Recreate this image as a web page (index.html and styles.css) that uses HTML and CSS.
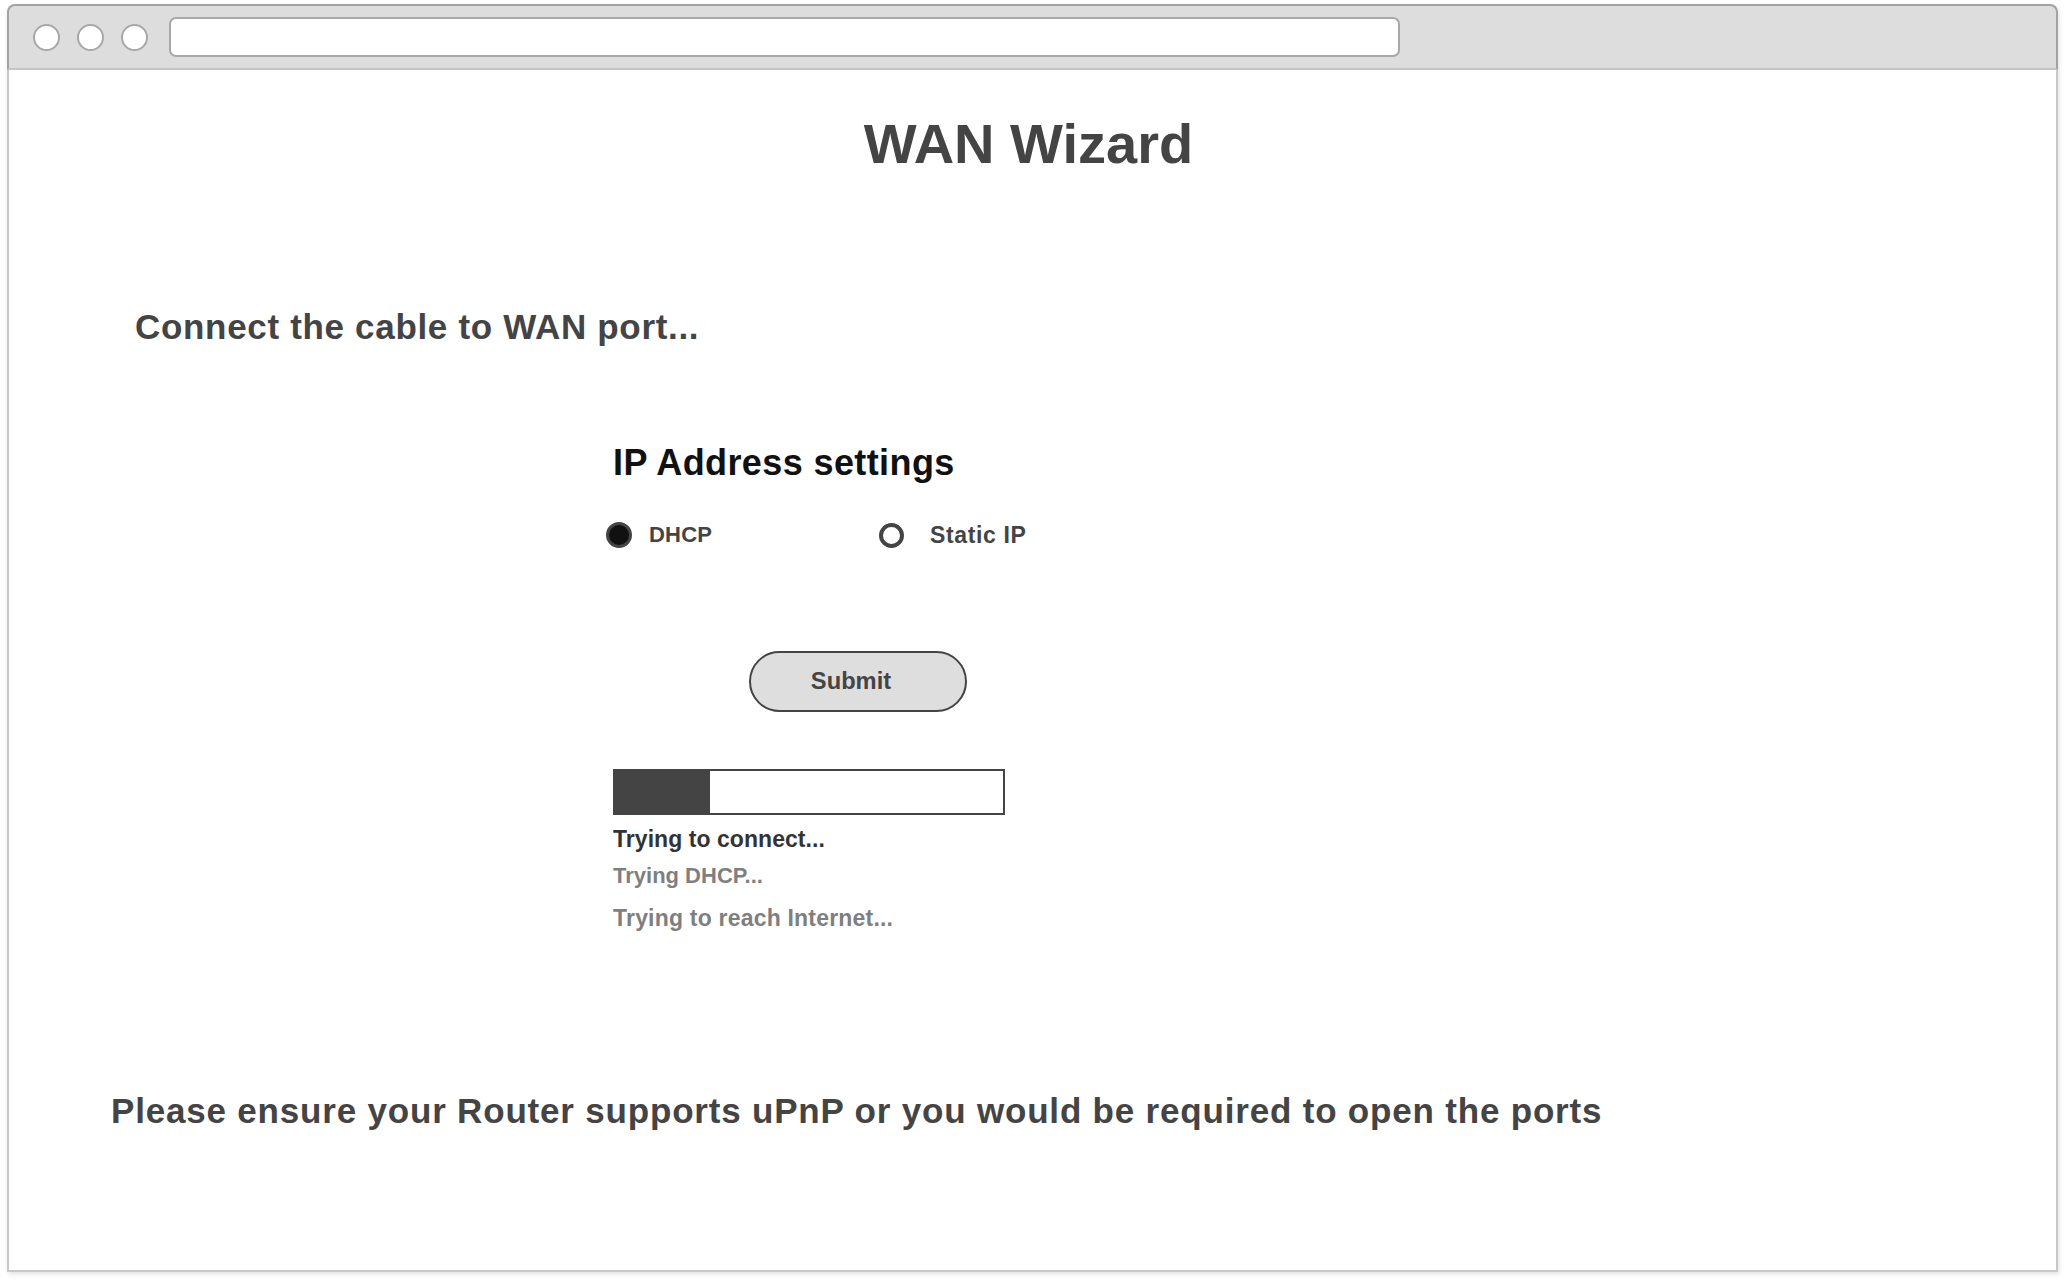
FILE: index.html
```html
<!DOCTYPE html>
<html lang="en">
<head>
<meta charset="utf-8">
<title>WAN Wizard</title>
<link rel="stylesheet" href="styles.css">
</head>
<body>
<div class="window">
  <div class="chrome">
    <span class="dot"></span>
    <span class="dot"></span>
    <span class="dot"></span>
    <div class="address"></div>
  </div>
  <div class="content">
    <h1 class="title">WAN Wizard</h1>
    <p class="connect">Connect the cable to WAN port...</p>
    <div class="group">
      <h2 class="ip-title">IP Address settings</h2>
      <div class="radios">
        <label class="radio radio-dhcp"><span class="circle checked"></span><span class="radio-label">DHCP</span></label>
        <label class="radio radio-static"><span class="circle"></span><span class="radio-label">Static IP</span></label>
      </div>
      <button class="submit">Submit</button>
      <div class="progress"><div class="progress-fill" style="width: 95px"></div></div>
      <p class="status status-main">Trying to connect...</p>
      <p class="status status-dhcp">Trying DHCP...</p>
      <p class="status status-net">Trying to reach Internet...</p>
    </div>
    <p class="notice">Please ensure your Router supports uPnP or you would be required to open the ports</p>
  </div>
</div>
</body>
</html>
```
FILE: styles.css
```css
* { box-sizing: border-box; }
html, body { margin: 0; padding: 0; background: #ffffff; }
body {
  font-family: "Liberation Sans", Arial, sans-serif;
  width: 2067px;
  height: 1282px;
  overflow: hidden;
}
.window {
  margin: 4px 9px 0 7px;
  width: 2051px;
  height: 1268px;
  display: flex;
  flex-direction: column;
  box-shadow: 1px 2px 5px rgba(0,0,0,0.12);
  border-radius: 8px 8px 0 0;
}
.chrome {
  height: 66px;
  flex: none;
  background: #dddddd;
  border: 2px solid #a2a2a2;
  border-bottom: 2px solid #c4c4c4;
  border-radius: 8px 8px 0 0;
  display: flex;
  align-items: center;
  padding-left: 24px;
  gap: 17px;
}
.dot {
  width: 27px;
  height: 27px;
  border-radius: 50%;
  background: #ffffff;
  border: 2px solid #a8a8a8;
  flex: none;
}
.address {
  margin-left: 4px;
  width: 1231px;
  height: 40px;
  background: #ffffff;
  border: 2px solid #a8a8a8;
  border-radius: 7px;
}
.content {
  flex: 1;
  background: #ffffff;
  border: 2px solid #c8c8c8;
  border-top: none;
  padding-top: 42px;
  display: flex;
  flex-direction: column;
  align-items: flex-start;
}
.title {
  margin: 0;
  align-self: stretch;
  text-align: center;
  font-size: 56px;
  line-height: 1.15;
  font-weight: bold;
  color: #444444;
  padding-right: 8px;
}
.connect {
  margin: 131px 0 0 126px;
  font-size: 35px;
  line-height: 1.15;
  font-weight: bold;
  color: #444444;
  letter-spacing: 0.68px;
}
.group {
  margin-left: 604px;
  display: flex;
  flex-direction: column;
  align-items: flex-start;
}
.ip-title {
  margin: 94px 0 0 0;
  font-size: 36px;
  line-height: 1.15;
  font-weight: bold;
  color: #111111;
  letter-spacing: 0.4px;
}
.radios {
  margin: 39px 0 0 -7px;
  display: flex;
  align-items: center;
  height: 26px;
}
.radio {
  display: flex;
  align-items: center;
  line-height: 1.15;
  font-weight: bold;
  color: #444444;
}
.radio-dhcp { width: 273px; gap: 17px; font-size: 22px; letter-spacing: 0.2px; }
.radio-static { gap: 26px; font-size: 23px; letter-spacing: 0.65px; }
.circle {
  width: 25px;
  height: 25px;
  border-radius: 50%;
  border: 4px solid #444444;
  background: #ffffff;
  flex: none;
}
.circle.checked {
  width: 26px;
  height: 26px;
  border: 3px solid #444444;
  background: #111111;
}
.submit {
  margin: 103px 0 0 136px;
  width: 218px;
  height: 61px;
  border-radius: 31px;
  border: 2px solid #444444;
  background: #dedede;
  font-family: "Liberation Sans", Arial, sans-serif;
  font-size: 23.7px;
  font-weight: bold;
  color: #444444;
  padding: 0 14px 0 0;
}
.progress {
  margin-top: 57px;
  width: 392px;
  height: 46px;
  border: 2px solid #444444;
  background: #ffffff;
}
.progress-fill {
  height: 100%;
  background: #444444;
}
.status {
  margin: 0;
  line-height: 1.15;
  font-weight: bold;
}
.status-main { margin-top: 11px; font-size: 23px; color: #333333; letter-spacing: 0.05px; }
.status-dhcp { margin-top: 11px; font-size: 22px; color: #7f7f7f; }
.status-net { margin-top: 16px; font-size: 23px; color: #7f7f7f; letter-spacing: 0.2px; }
.notice {
  margin: 160px 0 0 102px;
  font-size: 35px;
  line-height: 1.15;
  font-weight: bold;
  color: #444444;
  letter-spacing: 0.81px;
}
```
